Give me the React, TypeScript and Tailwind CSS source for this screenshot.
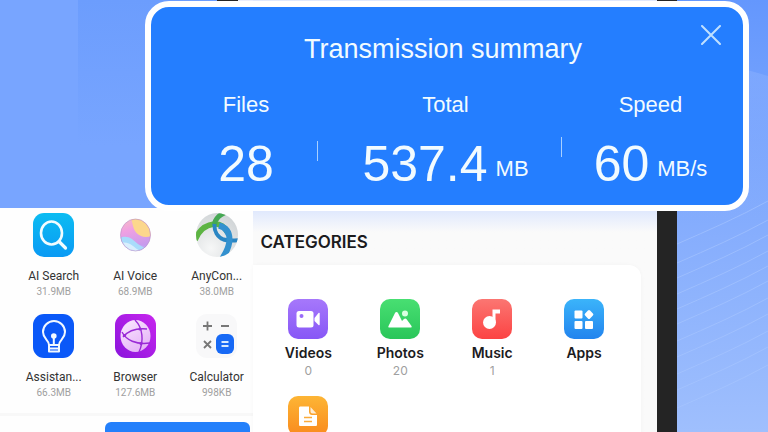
import type { ReactNode } from "react";

type AppItem = { name: string; size: string; icon: ReactNode };
type Category = { name: string; count?: string; icon: ReactNode };

function SearchIcon() {
  return (
    <svg viewBox="0 0 41 44" className="h-11 w-[41px]">
      <defs>
        <linearGradient id="search-bg" x1="0" y1="0" x2="0" y2="1">
          <stop offset="0" stopColor="#0cbcf2" />
          <stop offset="1" stopColor="#0a9af4" />
        </linearGradient>
      </defs>
      <rect width="41" height="44" rx="11" fill="url(#search-bg)" />
      <ellipse cx="18.500" cy="20" rx="10.500" ry="11.500" fill="none" stroke="#f2fcff" strokeWidth="2.600" />
      <path d="M26 28.500l6.500 6.500" stroke="#f2fcff" strokeWidth="3.200" strokeLinecap="round" />
    </svg>
  );
}

function VoiceIcon() {
  return (
    <svg viewBox="0 0 41 44" className="h-11 w-[41px]">
      <defs>
        <clipPath id="voice-clip">
          <ellipse cx="20.500" cy="22" rx="15" ry="16" />
        </clipPath>
        <linearGradient id="voice-bg" x1="0" y1="0" x2="0.300" y2="1">
          <stop offset="0" stopColor="#f9d0b0" />
          <stop offset="0.450" stopColor="#f0a0e2" />
          <stop offset="1" stopColor="#b99af0" />
        </linearGradient>
      </defs>
      <g clipPath="url(#voice-clip)">
        <rect width="41" height="44" fill="url(#voice-bg)" />
        <path d="M14 4c3 2 3 5 4 9 2 8 8 13 19 10V3z" fill="#fcd78c" />
        <path d="M3 24c6-1 9 0 13 3s9 6 19 6l-6 12H3z" fill="#c3a5f2" />
        <path d="M3 27c4-4 9-4 14-1 5 4 7 7 14 9l-6 9H3z" fill="#a9dcfb" />
        <path d="M3 31c6-3 11-1 15 2s5 4 8 5l-8 6H3z" fill="#d9effd" />
      </g>
      <ellipse cx="20.500" cy="22" rx="15" ry="16" fill="none" stroke="#b98fc8" strokeOpacity="0.600" />
    </svg>
  );
}

function AnyConnectIcon() {
  return (
    <svg viewBox="0 0 42 44" className="h-11 w-[42px]">
      <defs>
        <clipPath id="any-clip">
          <ellipse cx="21" cy="22" rx="21" ry="22" />
        </clipPath>
        <radialGradient id="any-bg" cx="0.350" cy="0.800" r="0.800">
          <stop offset="0" stopColor="#f6f7f7" />
          <stop offset="1" stopColor="#d2d6d8" />
        </radialGradient>
      </defs>
      <g clipPath="url(#any-clip)">
        <rect width="42" height="44" fill="url(#any-bg)" />
        <path d="M-1 27C3 17 9 12 18 11c6-.5 11 3 13 8" fill="none" stroke="#5db443" strokeWidth="5.500" />
        <path d="M30-1c-6 3-11 6-11.500 13" fill="none" stroke="#45a853" strokeWidth="5" />
        <path d="M18.500 11c-.5 7 3 13 9 15.500 5 1.500 9 1.500 16 .5" fill="none" stroke="#2a86c4" strokeWidth="4" />
        <path d="M23 12.500c7 2 10.500 7 10.500 14C33.500 34 30 40 26 46" fill="none" stroke="#3391cf" strokeWidth="6" />
      </g>
    </svg>
  );
}

function AssistantIcon() {
  return (
    <svg viewBox="0 0 41 44" className="h-11 w-[41px]">
      <rect width="41" height="44" rx="11" fill="#0a58f8" />
      <g fill="none" stroke="#f1f8ff" strokeWidth="2" strokeLinecap="round" strokeLinejoin="round">
        <path d="M16 31c0-5-6-6-6-13a11 11 0 0 1 22 0c0 7-6 8-6 13z" />
        <path d="M16 34.500h10M16 31v6.500h10V31M20.800 24v7" />
      </g>
      <circle cx="20.800" cy="22" r="2.800" fill="#f1f8ff" />
    </svg>
  );
}

function BrowserIcon() {
  return (
    <svg viewBox="0 0 41 44" className="h-11 w-[41px]">
      <defs>
        <linearGradient id="browser-bg" x1="1" y1="0" x2="0" y2="1">
          <stop offset="0" stopColor="#c726ee" />
          <stop offset="1" stopColor="#8a14dc" />
        </linearGradient>
        <linearGradient id="browser-globe" x1="0" y1="0" x2="0.600" y2="1">
          <stop offset="0" stopColor="#fbeaff" />
          <stop offset="1" stopColor="#e5b4f7" />
        </linearGradient>
      </defs>
      <rect width="41" height="44" rx="11" fill="url(#browser-bg)" />
      <ellipse cx="20.500" cy="22" rx="15" ry="16" fill="url(#browser-globe)" />
      <g fill="none" stroke="#9a2bd6" strokeWidth="1.400">
        <path d="M8 23c5-6 13-9 24-8" />
        <path d="M7 18c4 8 14 13 28 11" />
        <path d="M20 6c8 8 9 21 4 32" />
      </g>
      <g fill="#9a2bd6">
        <circle cx="9.500" cy="21.500" r="1.600" />
        <circle cx="25" cy="15" r="1.600" />
        <circle cx="26" cy="29.500" r="1.600" />
      </g>
    </svg>
  );
}

function CalculatorIcon() {
  return (
    <svg viewBox="0 0 41 44" className="h-11 w-[41px]">
      <rect width="41" height="44" rx="11" fill="#f8f8f9" />
      <path d="M7 12h9M11.500 7.500v9M25 12h8M8 27l7 7M15 27l-7 7" stroke="#777" strokeWidth="1.800" />
      <rect x="20" y="20" width="18" height="20" rx="6" fill="#1769f5" />
      <path d="M25.500 28h7M25.500 32h7" stroke="#d8eaff" strokeWidth="1.800" />
    </svg>
  );
}

function VideosIcon() {
  return (
    <svg viewBox="0 0 40 40" className="size-10">
      <defs>
        <linearGradient id="videos-bg" x1="0" y1="0" x2="0" y2="1">
          <stop offset="0" stopColor="#a678fb" />
          <stop offset="1" stopColor="#8757f6" />
        </linearGradient>
      </defs>
      <rect width="40" height="40" rx="10" fill="url(#videos-bg)" />
      <rect x="8.500" y="12" width="17" height="16.500" rx="2.500" fill="#fff" />
      <path d="M26.500 19l4-5c.5-.5 1.200-.3 1.200.5v11c0 .8-.7 1-1.200.5l-4-4z" fill="#fff" />
      <circle cx="13.500" cy="17" r="2" fill="#9a6cf9" />
    </svg>
  );
}

function PhotosIcon() {
  return (
    <svg viewBox="0 0 40 40" className="size-10">
      <defs>
        <linearGradient id="photos-bg" x1="0" y1="0" x2="0" y2="1">
          <stop offset="0" stopColor="#48df72" />
          <stop offset="1" stopColor="#2ac65a" />
        </linearGradient>
      </defs>
      <rect width="40" height="40" rx="10" fill="url(#photos-bg)" />
      <path
        d="M8.500 27L15 14c.6-1.500 2.400-1.500 3 0l4 8 2-2c.8-.8 2-.7 2.600.3L31.500 27c.5 1 0 1.500-1 1.500H9.500c-1 0-1.500-.5-1-1.500z"
        fill="#fff"
      />
      <circle cx="25" cy="14.500" r="3" fill="#d9ffe2" />
    </svg>
  );
}

function MusicIcon() {
  return (
    <svg viewBox="0 0 40 40" className="size-10">
      <defs>
        <linearGradient id="music-bg" x1="0" y1="0" x2="0" y2="1">
          <stop offset="0" stopColor="#fb7672" />
          <stop offset="1" stopColor="#fc4343" />
        </linearGradient>
      </defs>
      <rect width="40" height="40" rx="10" fill="url(#music-bg)" />
      <circle cx="17.500" cy="23.500" r="6.500" fill="#fff" />
      <path d="M20.500 10.500H28v4h-4.500V24h-3z" fill="#fff" />
    </svg>
  );
}

function AppsIcon() {
  return (
    <svg viewBox="0 0 40 40" className="size-10">
      <defs>
        <linearGradient id="apps-bg" x1="0" y1="0" x2="0" y2="1">
          <stop offset="0" stopColor="#3bb4fa" />
          <stop offset="1" stopColor="#2284ee" />
        </linearGradient>
      </defs>
      <rect width="40" height="40" rx="10" fill="url(#apps-bg)" />
      <g fill="#fff">
        <rect x="10.500" y="11.500" width="8" height="8" rx="1" />
        <rect x="10.500" y="22" width="8" height="8" rx="1" />
        <rect x="21" y="22" width="8" height="8" rx="1" />
        <rect x="21.500" y="12" width="7" height="7" rx="1.500" transform="rotate(45 25 15.500)" />
      </g>
    </svg>
  );
}

function DocumentsIcon() {
  return (
    <svg viewBox="0 0 40 40" className="size-10">
      <defs>
        <linearGradient id="docs-bg" x1="0" y1="0" x2="0" y2="1">
          <stop offset="0" stopColor="#fdb535" />
          <stop offset="1" stopColor="#f98a1d" />
        </linearGradient>
      </defs>
      <rect width="40" height="40" rx="10" fill="url(#docs-bg)" />
      <path d="M12.500 10.500h8.500v5c0 2 1 3.500 3 3.500h5v9.500c0 1-.5 1.500-1.500 1.500h-15c-1 0-1.500-.5-1.500-1.500v-16.500c0-1 .5-1.500 1.500-1.500z" fill="#fff" />
      <path d="M22.500 11l6 6.500H24.500c-1.300 0-2-.7-2-2z" fill="#fff" fillOpacity="0.800" />
      <path d="M16 21.500h8M16 25.500h8" stroke="#fbac3c" strokeWidth="1.500" />
    </svg>
  );
}

const apps: AppItem[] = [
  { name: "AI Search", size: "31.9MB", icon: <SearchIcon /> },
  { name: "AI Voice", size: "68.9MB", icon: <VoiceIcon /> },
  { name: "AnyCon...", size: "38.0MB", icon: <AnyConnectIcon /> },
  { name: "Assistan...", size: "66.3MB", icon: <AssistantIcon /> },
  { name: "Browser", size: "127.6MB", icon: <BrowserIcon /> },
  { name: "Calculator", size: "998KB", icon: <CalculatorIcon /> },
];

const categories: Category[] = [
  { name: "Videos", count: "0", icon: <VideosIcon /> },
  { name: "Photos", count: "20", icon: <PhotosIcon /> },
  { name: "Music", count: "1", icon: <MusicIcon /> },
  { name: "Apps", icon: <AppsIcon /> },
];

function Stat({ label, value, unit }: { label: string; value: string; unit?: string }) {
  return (
    <div className="flex flex-col items-center">
      <dt className="text-[22px] leading-7">{label}</dt>
      <dd className="mt-5 flex items-end gap-2 whitespace-nowrap">
        <span className="text-[50px] leading-[50px]">{value}</span>
        {unit && <span className="text-[22px] leading-10">{unit}</span>}
      </dd>
    </div>
  );
}

function TransmissionSummary() {
  return (
    <section
      role="dialog"
      aria-labelledby="summary-title"
      className="absolute top-px right-[19px] left-[145px] z-10 h-[210px] rounded-3xl border-6 border-white bg-[#247eff] font-['Liberation_Sans',sans-serif] text-[#f2fbff]"
    >
      <h1 id="summary-title" className="pt-[26px] pr-2 text-center text-[27px] leading-8">
        Transmission summary
      </h1>
      <button type="button" aria-label="Close" className="absolute top-4 right-5 p-0.5">
        <svg viewBox="0 0 20 20" className="size-5" stroke="#bfe0ff" strokeWidth="2" strokeLinecap="round">
          <path d="M1 1l18 18M19 1L1 19" />
        </svg>
      </button>
      <dl className="mt-[26px] grid grid-cols-[142fr_1px_243fr_1px_181fr] pl-6">
        <Stat label="Files" value="28" />
        <div className="mt-[50px] h-5 bg-[#a9d0ff]" />
        <div className="pl-3">
          <Stat label="Total" value="537.4" unit="MB" />
        </div>
        <div className="mt-[46px] h-5 bg-[#a9d0ff]" />
        <div className="pr-1">
          <Stat label="Speed" value="60" unit="MB/s" />
        </div>
      </dl>
    </section>
  );
}

function AppsPanel() {
  return (
    <section className="flex-1 bg-[#fefefe] font-[Roboto,sans-serif]">
      <ul className="-mr-1 grid grid-cols-3 gap-y-[15px] pt-[5px] pl-[13px]">
        {apps.map((app) => (
          <li key={app.name} className="flex flex-col items-center">
            {app.icon}
            <span className="mt-[11px] text-xs leading-4 text-[#333]">{app.name}</span>
            <span className="text-[10px] leading-[15px] text-[#a0a0a0]">{app.size}</span>
          </li>
        ))}
      </ul>
      <div className="mt-[13px] border-t-3 border-[#f8f8f8] pt-1.5 pr-[3px] pl-[105px]">
        <button type="button" aria-label="Send" className="block h-10 w-full rounded-md bg-[#2480fb]" />
      </div>
    </section>
  );
}

function Phone() {
  return (
    <main className="flex flex-1 flex-col border-r-20 border-[#242424] bg-[#fafafa] bg-linear-to-b from-[#dfe8fd] from-[210px] to-[#fafafa] to-[232px] font-[Inter,sans-serif]">
      <h2 className="pt-[230px] pl-[7px] text-[17px] leading-6 font-semibold text-[#1b1b1d]">CATEGORIES</h2>
      <ul className="mt-[11px] mr-4 grid flex-1 grid-cols-4 content-start gap-y-[17px] rounded-tr-xl bg-white pt-[34px] pr-[11px] pl-[9px] shadow-[0_0_4px_rgba(0,0,0,0.03)]">
        {categories.map((category) => (
          <li key={category.name} className="flex flex-col items-center">
            {category.icon}
            <span className="mt-1 text-sm leading-5 font-semibold text-[#1c1c1e]">{category.name}</span>
            <span className="text-xs leading-4 text-[#a0a0a0]">{category.count}</span>
          </li>
        ))}
        <li aria-label="Documents" className="flex flex-col items-center">
          <DocumentsIcon />
        </li>
      </ul>
    </main>
  );
}

const waves = [244, 263, 278, 294, 309, 324, 341, 357, 374, 390, 408];

function Backdrop() {
  return (
    <div className="w-[91px] bg-linear-to-b from-[#6497fd] via-[#87aefd] via-55% to-[#9fbffd]">
      <svg viewBox="0 0 91 432" preserveAspectRatio="none" className="h-full w-full">
        <defs>
          <linearGradient id="fold" x1="0" y1="0" x2="0" y2="1">
            <stop offset="0" stopColor="#8fb3ff" stopOpacity="0.500" />
            <stop offset="1" stopColor="#8fb3ff" stopOpacity="0" />
          </linearGradient>
        </defs>
        <path d="M0 50L91 76V220H0z" fill="url(#fold)" />
        {waves.map((y) => (
          <path
            key={y}
            d={`M0 ${y}C32 ${y - 14} 62 ${y - 27} 91 ${y - 43}`}
            fill="none"
            stroke="#a9c6ff"
            strokeOpacity="0.600"
          />
        ))}
      </svg>
    </div>
  );
}

export default function App() {
  return (
    <div className="relative flex h-screen overflow-hidden bg-[#78a5ff]">
      <TransmissionSummary />
      <div className="flex w-[33%] flex-col">
        <div className="flex h-52 shrink-0">
          <div className="w-[78px] bg-[#78a5ff]" />
          <div className="flex-1 bg-linear-to-b from-[#6c9dfd] to-[#78a5ff] to-70%" />
          <div className="w-[21px] bg-[#242424]" />
          <div className="w-[15px] bg-[#e9edfd]" />
        </div>
        <AppsPanel />
      </div>
      <Phone />
      <Backdrop />
    </div>
  );
}
